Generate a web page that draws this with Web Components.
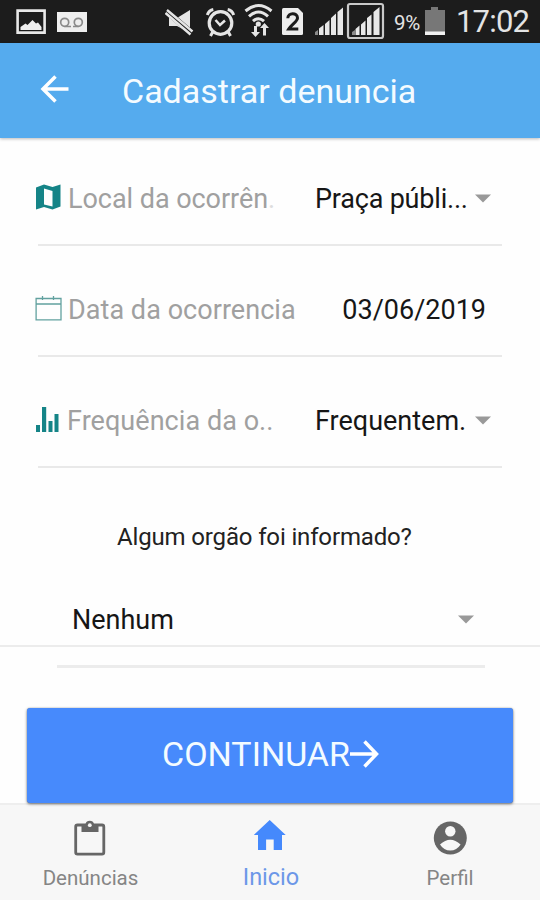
<!DOCTYPE html>
<html lang="pt-BR">
<head>
<meta charset="utf-8">
<title>Cadastrar denuncia</title>
<style>
html,body{margin:0;width:540px;height:900px;overflow:hidden;background:#fefefe;font-family:Roboto,"Liberation Sans",sans-serif}
</style>
</head>
<body>
<report-screen></report-screen>
<script>
const define = (name, css, html) => customElements.define(name, class extends HTMLElement {
  constructor() {
    super();
    this.attachShadow({mode: 'open'}).innerHTML = `<style>*{box-sizing:border-box}${css}</style>${typeof html === 'function' ? '' : html}`;
  }
  connectedCallback() {
    if (typeof html === 'function') this.shadowRoot.innerHTML = `<style>*{box-sizing:border-box}${css}</style>${html(this)}`;
  }
});

/* Each icon: [x, y, width, height of the view box, markup] */
const icons = {
  picture: [16, 9, 31, 26, '<path fill="none" stroke="#e8e8e8" stroke-width="2.6" d="M17.6 10.6h27v22h-27z"/><path fill="#eee" d="M20.5 30v-3l5-3.5 2 1.5 5-5 3.5 3.5 2-1 3.5 4.5v3z"/>'],
  voicemail: [56, 11, 32, 22, '<path fill="#eee" d="M57 12h30v20H57z"/><g fill="none" stroke="#8a8a8a" stroke-width="1.7"><circle cx="64.7" cy="22.3" r="4"/><circle cx="78.3" cy="22.3" r="4"/><path d="M64.7 26.5H71M73 26.5h5.3"/></g>'],
  mute: [165, 8, 30, 28, '<path fill="#e5e5e5" d="M169 18h8l13-8v23l-13-7h-8z"/><path stroke="#1c1c1c" stroke-width="6" d="M166 11l27 23"/><path stroke="#e5e5e5" stroke-width="2.4" d="M167 10l25.500 21.500M165.500 13l25 21.500"/>'],
  alarm: [205, 7, 31, 31, '<g fill="none" stroke="#e5e5e5"><circle cx="220.500" cy="23" r="11.300" stroke-width="3.200"/><path stroke-width="3" d="M207.300 15c1-3 3-5 6-5.500M233.700 15c-1-3-3-5-6-5.500"/><path stroke-width="3" d="M213 31.500l-2.500 4.500M228 31.500l2.500 4.500"/><path stroke-width="2.500" d="M215.500 20l4.500 5 5-4.500"/></g>'],
  wifi: [243, 3, 31, 34, '<g fill="none" stroke="#e5e5e5" stroke-width="3"><path d="M245.500 11q13-11 26 0M249 16.300q9.500-8.500 19 0M253 21.200q5.500-5 11 0"/></g><circle cx="258.300" cy="24" r="2.600" fill="#e5e5e5"/><path fill="#e5e5e5" d="M254 26h3v6h3l-4.500 5-4.500-5h3zM263 35.500h3V28h3l-4.500-5-4.500 5h3z"/>'],
  sim: [281, 7, 23, 30, '<path fill="#ededed" d="M282 9.500q0-1.500 1.500-1.500H298l5 5v20.500q0 1.500-1.500 1.500h-18q-1.500 0-1.500-1.500z"/><path fill="none" stroke="#1c1c1c" stroke-width="3" d="M287.800 18.200c0-6 9.700-6 9.700-.3 0 3.500-6 6.500-8.800 11.100h9.600"/>'],
  signal: [314, 7, 30, 29, '<path fill="#8a8a8a" d="M315 35v-3l3-2v5z"/><path fill="#e8e8e8" d="M319 35v-6.500l4.500-3.500V35zM325 35V24l4.500-4v15zM331 35V18l5-4.500V35zM337.500 35V12l5.500-4.500V35z"/>'],
  signalBox: [346, 2, 39, 38, '<rect x="348" y="4" width="35" height="34" rx="2" fill="none" stroke="#c9c9c9" stroke-width="2.200"/><path fill="#8a8a8a" d="M352 35v-3l3-2v5z"/><path fill="#e8e8e8" d="M355.500 35v-6l4-3.500V35zM361 35V24.500l4.500-4V35zM367 35V18l4.500-3.500V35zM373.500 35V12l6-5v28z"/>'],
  battery: [424, 6, 22, 30, '<path fill="#777" d="M425 10h6V7h7v3h7v22h-20z"/><path fill="#f2f2f2" d="M425 31.500h20V35h-20z"/>'],
  back: [40, 74, 30, 30, '<path fill="none" stroke="#fff" stroke-width="3.500" d="M68.500 89H43M55.500 76.500L43 89l12.500 12.500"/>'],
  map: [35, 184, 27, 26, '<path fill="#158487" d="M36 187.500l8-3 8.500 2.500 8-2.500v22l-8 3-8.500-2.500-8 2.500z"/><path fill="#fefefe" d="M44 188.500l8.500 2.500v15.500l-8.500-2z"/>'],
  calendar: [35, 295, 27, 27, '<path fill="none" stroke="#62a19f" stroke-width="1.300" d="M36.100 298.500H61v21.300H36.100zM36 304h25M42.500 296v4M53.500 296v4"/>'],
  bars: [35, 406, 25, 27, '<path fill="#158487" d="M36 425h4v7h-4zM42 407h4.200v25H42zM48.500 421h4v11h-4zM54.500 414h4v18h-4z"/>'],
  forward: [350, 739, 29, 30, '<path fill="none" stroke="#fff" stroke-width="3.500" d="M350 754h26M364.500 741.500l12 12.500-12 12.500"/>'],
  clipboard: [74, 820, 32, 37, '<path fill="none" stroke="#666" stroke-width="2.800" d="M77.500 825h24.500q1.800 0 1.800 1.800v25.500q0 1.800-1.800 1.800H77.500q-1.800 0-1.800-1.800v-25.500q0-1.800 1.800-1.800z"/><path fill="#666" d="M81.500 824h4a4.400 4.400 0 0 1 8.500 0h4.500v8h-17z"/><circle cx="89.800" cy="825.200" r="1.900" fill="#f7f7f7"/>'],
  home: [253, 819, 34, 33, '<path fill="#4589fc" d="M269.700 820l16 15H282V850h-8.300v-10.500h-7.600V850H258v-15h-4.200z"/>'],
  person: [433, 820, 35, 36, '<circle cx="450.300" cy="838" r="16.500" fill="#666"/><circle cx="450.300" cy="831.300" r="5.200" fill="#f7f7f7"/><path fill="#f7f7f7" d="M440 844.500q10.300-9.500 20.600 0-3.800 6-10.300 6t-10.300-6z"/>'],
  caret: [0, 0, 16, 9, '<path fill="#999" d="M0 .5h16L8 8.500z"/>']
};
define('ui-icon', ':host{display:block;flex:none}svg{display:block}', el => {
  const [x, y, w, h, body] = icons[el.getAttribute('name')];
  return `<svg width="${w}" height="${h}" viewBox="${x} ${y} ${w} ${h}">${body}</svg>`;
});

define('status-bar', `:host{display:flex;align-items:flex-start;height:43px;background:#1c1c1c;color:#e4e4e4;padding-left:16px;box-sizing:border-box;white-space:nowrap}
.pct{margin:11px 0 0 9px;width:30px;font-size:20.500px;line-height:24px;letter-spacing:-.3px}
.time{margin:4px 0 0 10px;font-size:31px;line-height:36px;letter-spacing:-.8px}`,
`<ui-icon name="picture" style="margin-top:9px"></ui-icon>
<ui-icon name="voicemail" style="margin:11px 0 0 9px"></ui-icon>
<ui-icon name="mute" style="margin:8px 0 0 77px"></ui-icon>
<ui-icon name="alarm" style="margin:7px 0 0 10px"></ui-icon>
<ui-icon name="wifi" style="margin:3px 0 0 7px"></ui-icon>
<ui-icon name="sim" style="margin:7px 0 0 7px"></ui-icon>
<ui-icon name="signal" style="margin:7px 0 0 10px"></ui-icon>
<ui-icon name="signalBox" style="margin:2px 0 0 2px"></ui-icon>
<span class="pct">9%</span>
<ui-icon name="battery" style="margin-top:6px"></ui-icon>
<span class="time">17:02</span>`);

define('app-header', `:host{display:flex;align-items:center;height:95px;padding:0 0 0 40px;box-sizing:border-box;background:#55abee;color:#f4fbff;box-shadow:0 1px 3px #0004;position:relative}
h1{margin:0 0 0 52px;font-size:34px;line-height:40px;font-weight:400;white-space:nowrap}`,
`<ui-icon name="back" style="margin-top:-3px"></ui-icon><h1><slot></slot></h1>`);

define('form-row', `:host{display:flex;align-items:center;height:111px;margin:0 38px;padding:17px 11px 0 0;box-sizing:border-box;border-bottom:2px solid #e9e9e9;white-space:nowrap;font-size:27px;line-height:32px;color:#a0a0a0}
.icon{width:27px;margin:-2px 0 0 -3px}
.label{margin:2px 0 0 6px;flex:1;letter-spacing:.05px}
.value{margin-top:2px;color:#161616}
:host([select]) .value{width:153px}
ui-icon[name=caret]{margin:0 0 0 7px}`,
el => `<ui-icon class="icon" name="${el.getAttribute('icon')}"></ui-icon><span class="label"><slot></slot></span><span class="value"><slot name="value"></slot></span>${el.hasAttribute('select') ? '<ui-icon name="caret"></ui-icon>' : ''}`);

define('agency-field', `:host{display:block}
p{margin:0;padding-left:117px;font-size:24px;line-height:30px;letter-spacing:-.15px;color:#222;white-space:nowrap}
.select{display:flex;align-items:center;justify-content:space-between;margin-top:52px;padding:0 66px 0 72px;height:32px;font-size:27px;line-height:32px;color:#161616}
.select ui-icon{margin-top:-2px}
.edge{height:1.500px;margin-top:9px;background:#ececec}
.line{height:3px;margin:18px 55px 0 57px;background:#ececec}`,
`<p><slot></slot></p><div class="select"><slot name="value"></slot><ui-icon name="caret"></ui-icon></div><div class="edge"></div><div class="line"></div>`);

define('primary-button', `:host{display:block;position:relative}
button{display:flex;align-items:center;justify-content:flex-start;width:486px;height:95px;margin-left:27px;padding:0 0 0 135px;border:0;border-radius:3px;background:#478afc;color:#f4fbff;font:400 34px/40px Roboto,sans-serif;box-shadow:0 1px 3px #0008,0 0 1px #0006;white-space:nowrap}
span{width:188px;margin-top:-3px}`,
`<button><span><slot></slot></span><ui-icon name="forward" style="margin-top:-3px"></ui-icon></button>`);

define('tab-item', `:host{display:flex;flex-direction:column;align-items:center;color:#858585;font-size:20.500px;line-height:26px;white-space:nowrap}
:host([active]){color:#6c97e8;font-size:23.500px}
.box{height:45px}
:host([active]) .box{height:45px;margin-top:-1px}
:host([active]) span{margin-left:2px}
:host(:first-child) span{margin-left:1px}`,
el => `<div class="box"><ui-icon name="${el.getAttribute('icon')}"></ui-icon></div><span><slot></slot></span>`);

define('tab-bar', `:host{display:grid;grid-template-columns:repeat(3,180px);flex:1;background:#f7f7f7;border-top:2px solid #eee;padding-top:15px;box-sizing:border-box}`, `<slot></slot>`);

define('report-screen', `:host{display:flex;flex-direction:column;width:540px;height:900px;background:#fefefe}
main{height:570px;flex:none}
form-row:first-child{height:108px;padding-top:14px}
agency-field{margin-top:54px}`,
`<status-bar></status-bar>
<app-header>Cadastrar denuncia</app-header>
<main>
<form-row icon="map" select><span style="letter-spacing:-.05px">Local da ocorrên<span style="color:#ddd">.</span></span><span slot="value" style="letter-spacing:-.2px">Praça públi...</span></form-row>
<form-row icon="calendar">Data da ocorrencia<span slot="value" style="margin-right:5px">03/06/2019</span></form-row>
<form-row icon="bars" select><span style="margin-left:-1px">Frequência da o..</span><span slot="value">Frequentem.</span></form-row>
<agency-field>Algum orgão foi informado?<span slot="value">Nenhum</span></agency-field>
</main>
<primary-button>CONTINUAR</primary-button>
<tab-bar><tab-item icon="clipboard">Denúncias</tab-item><tab-item icon="home" active>Inicio</tab-item><tab-item icon="person">Perfil</tab-item></tab-bar>`);
</script>
</body>
</html>
